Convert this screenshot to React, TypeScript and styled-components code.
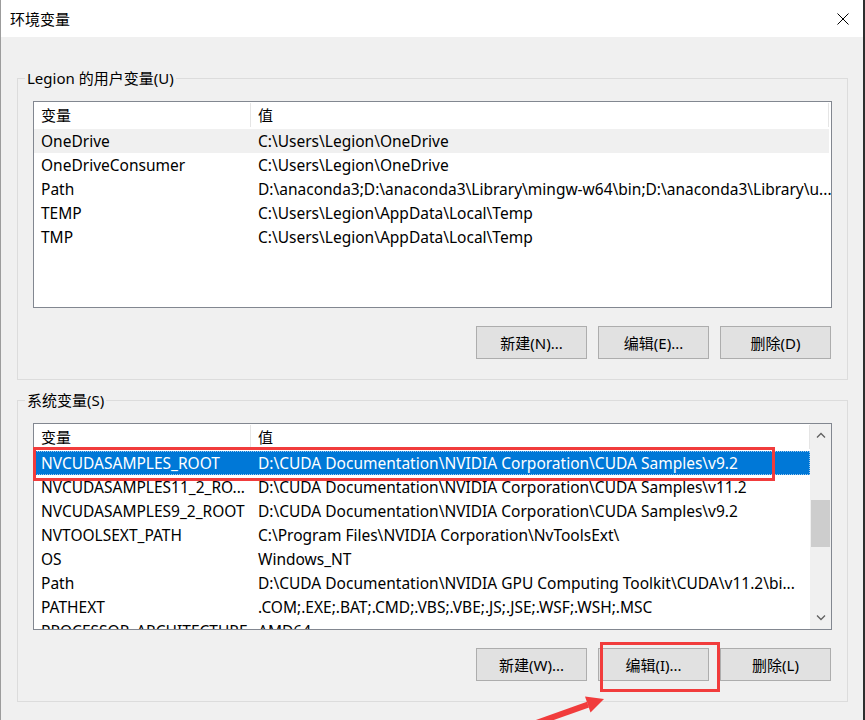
import React from "react";
import styled, { createGlobalStyle } from "styled-components";

const GlobalStyle = createGlobalStyle`
  html, body { margin: 0; padding: 0; background: #ffffff; }
  body {
    font-family: "Noto Sans", "Noto Sans CJK SC", sans-serif;
    font-size: 15px;
    color: #000;
  }
  * { box-sizing: border-box; }
`;

const Window = styled.div`
  position: relative;
  width: 865px;
  height: 720px;
  overflow: hidden;
  background: #f0f0f0;
  border-left: 1px solid #9c9c9c;
  border-right: 2px solid #2e2e2e;
  display: flex;
  flex-direction: column;
`;

const TitleBar = styled.div`
  height: 37px;
  flex: none;
  background: #ffffff;
  display: flex;
  align-items: center;
  justify-content: space-between;
  padding: 0 14px 0 9px;
`;

const TitleText = styled.span`
  font-size: 15px;
  line-height: 20px;
`;

const Body = styled.div`
  padding: 0 15px 0 16px;
  display: flex;
  flex-direction: column;
`;

const GroupBox = styled.div<{ $top: number }>`
  position: relative;
  margin-top: ${(p) => p.$top}px;
  height: 302px;
  border: 1px solid #dcdcdc;
  padding: 22px 15px 0 15px;
  display: flex;
  flex-direction: column;
`;

const Legend = styled.span`
  position: absolute;
  top: -11px;
  left: 7px;
  padding: 0 2px;
  background: #f0f0f0;
  line-height: 20px;
  font-size: 15px;
`;

const ListView = styled.div`
  position: relative;
  height: 207px;
  border: 1px solid #828790;
  background: #ffffff;
  display: flex;
  overflow: hidden;
`;

const ListBody = styled.div`
  flex: 1;
  display: flex;
  flex-direction: column;
  min-width: 0;
`;

const HeaderRow = styled.div<{ $trim: number }>`
  height: 27px;
  flex: none;
  display: grid;
  grid-template-columns: 217px 1fr;
  margin-right: ${(p) => p.$trim}px;
`;

const HeaderCell = styled.div`
  display: flex;
  align-items: center;
  padding: 0 7px 2px;
  margin: 1px 0 2px;
  border-right: 1px solid #e5e5e5;
  white-space: nowrap;
`;

const Row = styled.div<{ $state?: "selected" | "hover"; $trim: number }>`
  height: 24px;
  flex: none;
  display: grid;
  grid-template-columns: 217px 1fr;
  margin-right: ${(p) => p.$trim}px;
  background: ${(p) =>
    p.$state === "selected" ? "#0078d7" : p.$state === "hover" ? "#f0f0f0" : "transparent"};
  color: ${(p) => (p.$state === "selected" ? "#ffffff" : "#000000")};
  outline: ${(p) => (p.$state === "selected" ? "1px dotted #9ccaf0" : "none")};
  outline-offset: -1px;
`;

const Cell = styled.div`
  padding: 0 7px;
  font-size: 15.5px;
  line-height: 24px;
  white-space: nowrap;
  overflow: visible;
`;

const ScrollBar = styled.div`
  width: 21px;
  flex: none;
  background: #f0f0f0;
  display: flex;
  flex-direction: column;
`;

const ScrollArrow = styled.div`
  height: 22px;
  flex: none;
  display: flex;
  align-items: center;
  justify-content: center;
`;

const ScrollTrack = styled.div`
  flex: 1;
  padding-top: 54px;
`;

const Thumb = styled.div`
  height: 47px;
  margin: 0 1px;
  background: #cdcdcd;
`;

const ButtonRow = styled.div`
  display: flex;
  justify-content: flex-end;
  gap: 11px;
  margin-top: 18px;
  padding-right: 1px;
`;

const Button = styled.div`
  position: relative;
  width: 111px;
  height: 33px;
  background: #e1e1e1;
  border: 1px solid #adadad;
  display: flex;
  align-items: center;
  justify-content: center;
  font-size: 15px;
  white-space: nowrap;
`;

const Highlight = styled.div<{ $l: number; $t: number; $w: number; $h: number }>`
  position: absolute;
  left: ${(p) => p.$l}px;
  top: ${(p) => p.$t}px;
  width: ${(p) => p.$w}px;
  height: ${(p) => p.$h}px;
  border: 3px solid #f13c3c;
  pointer-events: none;
`;

const ArrowSvg = styled.svg`
  position: absolute;
  left: 519px;
  top: 690px;
  overflow: visible;
`;

type Item = { name: string; value: string; state?: "selected" | "hover" };

const userVars: Item[] = [
  { name: "OneDrive", value: "C:\\Users\\Legion\\OneDrive", state: "hover" },
  { name: "OneDriveConsumer", value: "C:\\Users\\Legion\\OneDrive" },
  {
    name: "Path",
    value: "D:\\anaconda3;D:\\anaconda3\\Library\\mingw-w64\\bin;D:\\anaconda3\\Library\\u...",
  },
  { name: "TEMP", value: "C:\\Users\\Legion\\AppData\\Local\\Temp" },
  { name: "TMP", value: "C:\\Users\\Legion\\AppData\\Local\\Temp" },
];

const sysVars: Item[] = [
  {
    name: "NVCUDASAMPLES_ROOT",
    value: "D:\\CUDA Documentation\\NVIDIA Corporation\\CUDA Samples\\v9.2",
    state: "selected",
  },
  { name: "NVCUDASAMPLES11_2_RO...", value: "D:\\CUDA Documentation\\NVIDIA Corporation\\CUDA Samples\\v11.2" },
  { name: "NVCUDASAMPLES9_2_ROOT", value: "D:\\CUDA Documentation\\NVIDIA Corporation\\CUDA Samples\\v9.2" },
  { name: "NVTOOLSEXT_PATH", value: "C:\\Program Files\\NVIDIA Corporation\\NvToolsExt\\" },
  { name: "OS", value: "Windows_NT" },
  { name: "Path", value: "D:\\CUDA Documentation\\NVIDIA GPU Computing Toolkit\\CUDA\\v11.2\\bi..." },
  { name: "PATHEXT", value: ".COM;.EXE;.BAT;.CMD;.VBS;.VBE;.JS;.JSE;.WSF;.WSH;.MSC" },
  { name: "PROCESSOR_ARCHITECTURE", value: "AMD64" },
];

const VarList: React.FC<{ items: Item[]; scroll?: boolean }> = ({ items, scroll }) => {
  const trim = scroll ? 0 : 2;
  return (
    <ListView>
      <ListBody>
        <HeaderRow $trim={trim}>
          <HeaderCell>变量</HeaderCell>
          <HeaderCell>值</HeaderCell>
        </HeaderRow>
        {items.map((it, i) => (
          <Row key={i} $state={it.state} $trim={trim}>
            <Cell>{it.name}</Cell>
            <Cell>{it.value}</Cell>
          </Row>
        ))}
      </ListBody>
      {scroll && (
        <ScrollBar>
          <ScrollArrow>
            <svg width="10" height="6" viewBox="0 0 10 6">
              <path d="M1 5.5 L5 1.5 L9 5.5" fill="none" stroke="#606060" strokeWidth="1.3" />
            </svg>
          </ScrollArrow>
          <ScrollTrack>
            <Thumb />
          </ScrollTrack>
          <ScrollArrow>
            <svg width="10" height="6" viewBox="0 0 10 6">
              <path d="M1 0.5 L5 4.5 L9 0.5" fill="none" stroke="#606060" strokeWidth="1.3" />
            </svg>
          </ScrollArrow>
        </ScrollBar>
      )}
    </ListView>
  );
};

export default function App() {
  return (
    <>
      <GlobalStyle />
      <Window>
        <TitleBar>
          <TitleText>环境变量</TitleText>
          <svg width="12" height="12" viewBox="0 0 12 12">
            <path d="M0.5 0.5 L11.5 11.5 M11.5 0.5 L0.5 11.5" stroke="#000" strokeWidth="1" />
          </svg>
        </TitleBar>
        <Body>
          <GroupBox $top={41}>
            <Legend>Legion 的用户变量(U)</Legend>
            <VarList items={userVars} />
            <ButtonRow>
              <Button>新建(N)...</Button>
              <Button>编辑(E)...</Button>
              <Button>删除(D)</Button>
            </ButtonRow>
          </GroupBox>
          <GroupBox $top={20}>
            <Legend>系统变量(S)</Legend>
            <VarList items={sysVars} scroll />
            <ButtonRow>
              <Button>新建(W)...</Button>
              <Button>编辑(I)...</Button>
              <Button>删除(L)</Button>
            </ButtonRow>
          </GroupBox>
        </Body>
        <Highlight $l={32} $t={447} $w={742} $h={34} />
        <Highlight $l={599} $t={642} $w={120} $h={50} />
        <ArrowSvg width="100" height="40" viewBox="0 0 100 40">
          <path d="M8 36 L68 14.6" stroke="#f13c3c" strokeWidth="6" strokeLinecap="butt" />
          <polygon points="84,9 65,6.5 70.5,22.5" fill="#f13c3c" />
        </ArrowSvg>
      </Window>
    </>
  );
}
